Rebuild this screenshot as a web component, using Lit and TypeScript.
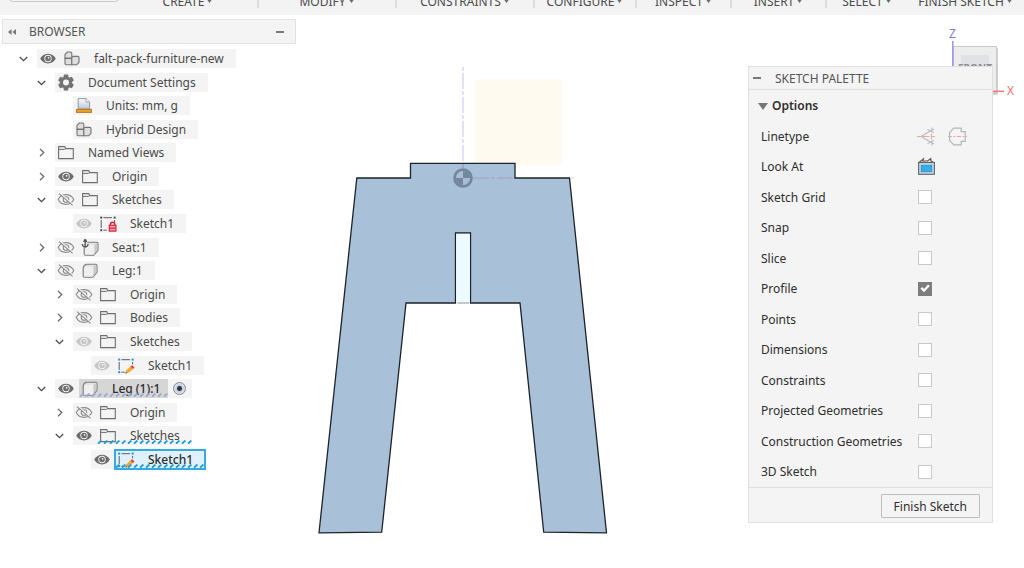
import { LitElement, html, svg, css, nothing } from "lit";
import { customElement, property } from "lit/decorators.js";
import { classMap } from "lit/directives/class-map.js";

type Eye = "on" | "off" | "dim";
interface Row {
  level: number;
  label: string;
  icon: string;
  open?: boolean;
  eye?: Eye;
  state?: "active" | "parent" | "selected";
}

const ROWS: Row[] = [
  { level: 0, label: "falt-pack-furniture-new", icon: "component", open: true, eye: "on" },
  { level: 1, label: "Document Settings", icon: "gear", open: true },
  { level: 2, label: "Units: mm, g", icon: "units" },
  { level: 2, label: "Hybrid Design", icon: "component" },
  { level: 1, label: "Named Views", icon: "folder", open: false },
  { level: 1, label: "Origin", icon: "folder", open: false, eye: "on" },
  { level: 1, label: "Sketches", icon: "folder", open: true, eye: "off" },
  { level: 2, label: "Sketch1", icon: "locked", eye: "dim" },
  { level: 1, label: "Seat:1", icon: "anchored", open: false, eye: "off" },
  { level: 1, label: "Leg:1", icon: "body", open: true, eye: "off" },
  { level: 2, label: "Origin", icon: "folder", open: false, eye: "off" },
  { level: 2, label: "Bodies", icon: "folder", open: false, eye: "off" },
  { level: 2, label: "Sketches", icon: "folder", open: true, eye: "dim" },
  { level: 3, label: "Sketch1", icon: "sketch", eye: "dim" },
  { level: 1, label: "Leg (1):1", icon: "body", open: true, eye: "on", state: "active" },
  { level: 2, label: "Origin", icon: "folder", open: false, eye: "off" },
  { level: 2, label: "Sketches", icon: "folder", open: true, eye: "on", state: "parent" },
  { level: 3, label: "Sketch1", icon: "sketch", eye: "on", state: "selected" },
];

const MENUS = ["CREATE", "MODIFY", "CONSTRAINTS", "CONFIGURE", "INSPECT", "INSERT", "SELECT", "FINISH SKETCH"];

const OPTIONS: [string, boolean][] = [
  ["Sketch Grid", false],
  ["Snap", false],
  ["Slice", false],
  ["Profile", true],
  ["Points", false],
  ["Dimensions", false],
  ["Constraints", false],
  ["Projected Geometries", false],
  ["Construction Geometries", false],
  ["3D Sketch", false],
];

const lens = "M3.2 9.5C6.5 3 15.5 3 18.8 9.5C15.5 16 6.5 16 3.2 9.5Z";

const eyeShape = (eye: Eye) =>
  eye === "off"
    ? svg`<g fill="none" stroke="#8a8a8a" stroke-width="1.1">
        <path d=${lens}/><circle cx="11" cy="9.5" r="2.8"/>
        <path d="M4.9 3.2L18.2 14.8" stroke="#f4f4f4" stroke-width="1.4"/>
        <path d="M4 3.6L17.6 15.4"/></g>`
    : svg`<g fill=${eye === "on" ? "#6c6c6c" : "#c6c6c6"}>
        <path d=${lens}/><circle cx="11" cy="9.5" r="3.7" fill="#f4f4f4"/>
        <circle cx="11" cy="9.5" r="2.8"/><circle cx="11.6" cy="8.8" r=".9" fill="#f4f4f4"/></g>`;

const bodyShape = svg`
  <path d="M7.6 3.2H16.6Q18 3.2 18 4.6V11.4L13.8 16.2H5.6Q4.2 16.2 4.2 14.8V6.8Q4.4 4 7.6 3.2Z" fill="#e3e3e3" stroke="#7b7b7b" stroke-width="1.1"/>
  <path d="M5 7.2Q5.6 5.8 7 5.8H14.4V15.4H5.4Q5 15.4 5 15Z" fill="#efefef"/>
  <path d="M14.5 5.8L17.4 3.9V11.2L14.5 14.6Z" fill="#c9c9c9"/>`;

const sketchFrame = (dot: string) => svg`
  <path d="M6.5 3.7H15M4.2 6V14M6.4 16.2H9.6M17.6 6V8.4" fill="none" stroke="#5d5d5d" stroke-width="1"/>
  <g fill=${dot}><rect x="3.2" y="2.6" width="2" height="2"/><rect x="16.6" y="2.6" width="2" height="2"/><rect x="3.2" y="15.2" width="2" height="2"/></g>`;

const SHAPES: Record<string, unknown> = {
  folder: svg`<path d="M3.6 15.6V3.6H9.8L10.6 5.6H18.3V15.6Z" fill="none" stroke="#6e6e6e" stroke-width="1.1"/>
    <path d="M4 6.4H9.4L10.6 5.6" fill="none" stroke="#6e6e6e" stroke-width="1"/>`,
  component: svg`<g fill="#dedede" stroke="#747474" stroke-width="1.1" stroke-linejoin="round">
    <path d="M6.4 3H9.6Q10.8 3 10.8 4.2V9.4H4V5.4Z"/><path d="M4 9.4H10.8V15.8H5.2Q4 15.8 4 14.6Z"/>
    <path d="M10.8 8.6L12 7.4H16.8Q18 7.4 18 8.6V13.4L15.6 15.8H10.8Z"/></g>`,
  gear: svg`<g fill="#737373">${[0, 60, 120].map(
    (a) => svg`<path d="M9 1.6H13L13.8 5H8.2ZM9 17.4H13L13.8 14H8.2Z" transform="rotate(${a} 11 9.5)"/>`
  )}</g><circle cx="11" cy="9.5" r="4.4" fill="none" stroke="#737373" stroke-width="2.8"/>`,
  units: svg`<defs><linearGradient id="pg" x2="0" y2="1"><stop stop-color="#fafbfd"/><stop offset="1" stop-color="#bcc5d8"/></linearGradient></defs>
    <path d="M5.2 13V2.6H13L16.6 6V13Z" fill="url(#pg)" stroke="#9298a5" stroke-width="1"/>
    <path d="M13 2.6V6H16.6" fill="#fff" stroke="#9298a5" stroke-width=".9"/>
    <rect x="3.6" y="13.4" width="14.8" height="3" fill="#e5a62a" stroke="#b57b16" stroke-width="1"/>`,
  body: bodyShape,
  anchored: svg`<g transform="translate(1 1)">${bodyShape}</g>
    <path d="M2 1H8.4V9.4H2Z" fill="#f4f4f4" opacity=".8"/>
    <g fill="none" stroke="#555" stroke-width="1.3"><path d="M6.2 1.6V8.8M4.4 3.4H8M3.2 6Q3.6 8.8 6.2 9Q8.8 8.8 9.2 6"/></g><circle cx="6.2" cy="2.2" r="1.3" fill="#555"/>`,
  locked: svg`${sketchFrame("#4b4b4b")}
    <path d="M13.4 11.6V10.4Q13.4 8.2 15.6 8.2Q17.8 8.2 17.8 10.4V11.6" fill="none" stroke="#d5203a" stroke-width="1.4"/>
    <rect x="12.3" y="11.3" width="6.6" height="5.8" fill="#f6a4ae" stroke="#d5203a" stroke-width="1.2"/><path d="M13 14.2H18.2" stroke="#d5203a" stroke-width="1.2"/>`,
  sketch: svg`${sketchFrame("#1f8fd6")}
    <path d="M10.4 17.6L11.4 14.2L15.4 10.6L18 13L14 16.6Z" fill="#f5a92c"/>
    <path d="M15.4 10.6L17 9.2L19.6 11.6L18 13Z" fill="#e23b35"/><path d="M10.4 17.6L10.9 15.8L12.2 17.1Z" fill="#444"/>`,
};

const icon = (shape: unknown) => html`<svg class="icon" viewBox="0 0 22 19" aria-hidden="true">${shape}</svg>`;

@customElement("tree-row")
class TreeRow extends LitElement {
  @property({ attribute: false }) row!: Row;

  static styles = css`
    :host { display: block; }
    .row { display: flex; align-items: center; height: 19px; padding-left: 12px; }
    .level-1 { padding-left: 30px; }
    .level-2 { padding-left: 48px; }
    .level-3 { padding-left: 66px; }
    button { display: block; border: 0; padding: 0; background: none; }
    .twist { width: 19px; height: 19px; margin-right: 4px; flex: none; }
    .twist svg { display: block; width: 19px; height: 19px; }
    .pill { display: flex; align-items: center; height: 19px; background: #f4f4f4; }
    .icon { display: block; width: 22px; height: 19px; flex: none; }
    .eye { margin-right: 2px; }
    .entry { display: flex; align-items: center; gap: 11px; height: 19px; padding-right: 12px; position: relative; }
    .label { font-size: 12px; line-height: 19px; white-space: nowrap; color: #4a4a4a; }
    .active { background: #d6d6d6; padding-right: 8px; }
    .active .label, .selected .label { font-weight: 500; color: #2c2c2c; }
    .selected { background: #dff2fc; outline: 2px solid #35a9e0; outline-offset: -1px; }
    .hatch { position: absolute; left: 0; bottom: 1px; width: 100%; height: 4px; color: #1c9cdc; }
    .active .hatch { color: #9aa9d4; }
    .radio { appearance: none; width: 13px; height: 13px; margin: 0 6px 0 5px; border: 1px solid #85878c; border-radius: 50%;
      background: radial-gradient(circle, #2c3440 0 2px, #c5cce0 3px, #e6e9f2 6px); }
  `;

  render() {
    const r = this.row;
    const state = r.state ?? "";
    return html`<div class=${classMap({ row: true, [`level-${r.level}`]: true })}>
      ${r.open === undefined
        ? html`<span class="twist"></span>`
        : html`<button class="twist" aria-label=${r.open ? "Collapse" : "Expand"}>
            <svg viewBox="0 0 19 19"><path d=${r.open ? "M5.8 8L9.5 11.6L13.2 8" : "M8 5.9L11.7 9.6L8 13.3"} fill="none" stroke=${r.open ? "#4c4c4c" : "#666"} stroke-width="1.3"/></svg>
          </button>`}
      <div class="pill">
        ${r.eye ? html`<button class="eye" aria-label="Visibility">${icon(eyeShape(r.eye))}</button>` : nothing}
        <div class=${classMap({ entry: true, [state || "plain"]: true })}>
          ${icon(SHAPES[r.icon])}<span class="label">${r.label}</span>
          ${state
            ? html`<svg class="hatch" aria-hidden="true"><defs><pattern id="h" width="6" height="4" patternUnits="userSpaceOnUse"><path d="M1 3.6L4.4 .6" stroke="currentColor" stroke-width="1.9"/></pattern></defs><rect width="100%" height="4" fill="url(#h)"/></svg>`
            : nothing}
        </div>
        ${state === "active" ? html`<input class="radio" type="radio" checked aria-label="Activate component" />` : nothing}
      </div>
    </div>`;
  }
}

@customElement("sketch-canvas")
class SketchCanvas extends LitElement {
  static styles = css`
    :host { display: block; }
    svg { display: block; width: 100%; height: 100%; }
    .axis { font-size: 12px; }
    .face { font-size: 10px; font-weight: 700; }
  `;
  render() {
    return html`<svg viewBox="0 15 1024 553" preserveAspectRatio="xMidYMin meet">
      <rect x="475" y="79.5" width="86.5" height="86" fill="#fffaf0" />
      <path d="M463 67V163" stroke="#dcd8f6" stroke-width="1.6" stroke-dasharray="4 2 16 2" />
      <path d="M410.5 163.3H515V178H569.5L606.5 532.8L543.7 532.2L520 303H470.5V233H455.5V303H406L381.7 532.2L319 532.8L356.8 178H410.5Z"
        fill="#a8c1d9" stroke="#1c2228" stroke-width="1.3" />
      <path d="M456.2 233.8H469.8V302.5H456.2Z" fill="#edfaff" />
      <path d="M457.5 303H469" stroke="#8e9599" stroke-width="1" />
      <path d="M463 164V168" stroke="#9792c4" stroke-width="1.2" />
      <path d="M473 178H515" stroke="#aa9db8" stroke-width="1.2" stroke-dasharray="16 2 4 2" />
      <path d="M571 178H574" stroke="#f3d2d6" stroke-width="1" />
      <circle cx="463" cy="178" r="8.4" fill="#95abc4" stroke="#72869f" stroke-width="2.8" />
      <path d="M463 178V171A7 7 0 0 1 470 178ZM463 178V185A7 7 0 0 1 456 178Z" fill="#72869f" />
      <path d="M463 178V171A7 7 0 0 0 456 178ZM463 178V185A7 7 0 0 0 470 178Z" fill="#a9bdd3" />
      <rect x="954" y="48" width="44" height="47" rx="1" fill="#d2d2d2" />
      <rect x="953.5" y="46.5" width="43" height="46" fill="#ededed" stroke="#cacaca" />
      <rect x="961" y="55" width="28" height="26" fill="#e0e2e5" />
      <text class="face" x="975" y="72" text-anchor="middle" fill="#8a8d94">FRONT</text>
      <path d="M952.8 41V92" stroke="#8f88ee" stroke-width="1.3" />
      <path d="M990 91.3H1004" stroke="#f27c7c" stroke-width="1.6" />
      <text class="axis" x="952.5" y="38" text-anchor="middle" fill="#7f78ea">Z</text>
      <text class="axis" x="1010.5" y="95" text-anchor="middle" fill="#f26d6d">X</text>
    </svg>`;
  }
}

@customElement("sketch-palette")
class SketchPalette extends LitElement {
  static styles = css`
    :host { display: block; }
    .panel { background: #f4f4f4; border: 1px solid #e0e0e0; color: #2e2e2e; font-size: 12px; line-height: 19px; }
    .head { display: flex; align-items: center; gap: 14px; height: 22px; padding-left: 4px; border-bottom: 1px solid #dedede; }
    .title { margin: 0; font-size: 12px; font-weight: 400; color: #555; }
    button { font: inherit; color: inherit; border: 0; padding: 0; background: none; }
    .min { display: block; width: 8px; height: 8px; }
    .min svg { display: block; }
    .body { display: flex; flex-direction: column; justify-content: space-between; height: 385px; padding: 6px 12px; }
    .row { display: flex; align-items: center; height: 19px; }
    .group { display: flex; align-items: center; gap: 4px; margin-left: -3px; font-weight: 600; }
    .name { width: 155px; flex: none; }
    .tools { display: flex; gap: 10px; }
    .tools svg { display: block; width: 21px; height: 21px; }
    .box { appearance: none; width: 14px; height: 14px; margin: 0 0 0 2px; background: #fff; border: 1px solid #c9c9c9; display: grid; place-items: center; }
    .box:checked { background: #7d7d7d; border-color: #7d7d7d; }
    .box:checked::before { content: ""; width: 10px; height: 10px; background: #fff; clip-path: polygon(5% 52%, 22% 36%, 40% 54%, 80% 10%, 98% 26%, 40% 88%); }
    .foot { display: flex; justify-content: flex-end; padding: 6px 12px 4px; border-top: 1px solid #dedede; }
    .finish { height: 24px; padding: 0 12px; border: 1px solid #bdbdbd; border-radius: 1px; }
  `;
  render() {
    return html`<section class="panel">
      <header class="head">
        <button class="min" aria-label="Minimize"><svg width="8" height="8"><rect y="3" width="8" height="2" fill="#777" /></svg></button>
        <h2 class="title">SKETCH PALETTE</h2>
      </header>
      <div class="body">
        <div class="row"><button class="group"><svg width="10" height="8"><path d="M0 1H10L5 8Z" fill="#777" /></svg>Options</button></div>
        <div class="row">
          <span class="name">Linetype</span>
          <span class="tools">
            <button aria-label="Construction"><svg viewBox="0 0 21 21">
              <path d="M18 3L5 10.5L18 18M11.5 3.4L17.8 6.4M11.5 17.6L17.8 14.6M16 1.6V6.6M16 14.4V19.4" fill="none" stroke="#b9bcbc" stroke-width="1.1" />
              <path d="M1 10.5H20" stroke="#f3a3a3" stroke-width="1.2" stroke-dasharray="4 1.5 7 1.5" /><path d="M15.5 7.5V13.5" stroke="#f3a3a3" stroke-width="1.1" /></svg></button>
            <button aria-label="Centerline"><svg viewBox="0 0 21 21">
              <path d="M2.6 6.6L6.8 2.2H14.2V5.6H18.2V15.4H14.2V18.8H6.8L2.6 14.4Z" fill="none" stroke="#b3b7b9" stroke-width="1.2" />
              <path d="M1 10.5H20" stroke="#f3a3a3" stroke-width="1.2" stroke-dasharray="4 1.5 2 1.5" /></svg></button>
          </span>
        </div>
        <div class="row">
          <span class="name">Look At</span>
          <span class="tools"><button aria-label="Look At"><svg viewBox="0 0 21 21">
            <path d="M3 6.5L7.5 2.8L6.8 5H11.5L14.8 2.5V4.6L17.5 6.5" fill="#e6eaec" stroke="#5f5148" stroke-width="1.1" />
            <rect x="2.6" y="6.5" width="15.8" height="11.8" fill="#c2d8e4" stroke="#5c6468" stroke-width="1.1" />
            <rect x="5.2" y="9.2" width="10.6" height="6.6" fill="#36aeee" stroke="#2b86b9" stroke-width=".7" /></svg></button></span>
        </div>
        ${OPTIONS.map(
          ([name, on], i) => html`<div class="row">
            <label class="name" for="opt-${i}">${name}</label><input class="box" id="opt-${i}" type="checkbox" ?checked=${on} />
          </div>`
        )}
      </div>
      <footer class="foot"><button class="finish">Finish Sketch</button></footer>
    </section>`;
  }
}

@customElement("app-root")
class AppRoot extends LitElement {
  static styles = css`
    :host { display: flex; flex-direction: column; height: 100vh; overflow: hidden; background: #fff;
      font-family: "Noto Sans", "Open Sans", sans-serif; }
    .toolbar { display: grid; grid-template-columns: 119fr 140fr 138fr 138fr 102fr 95fr 95fr 80fr 117fr; grid-template-rows: 15px;
      flex: none; align-items: end; overflow: hidden; background: #f3f3f3; }
    .mode { height: 24px; margin: 0 0 13px 9px; border: 1px solid #c8c8c8; border-radius: 4px; background: #f7f7f7; }
    .cell { height: 16px; margin-bottom: 7px; }
    .divided { border-right: 2px solid #dcdcdc; }
    .menu { display: flex; justify-content: center; align-items: center; gap: 2px; width: 100%; height: 20px; padding: 0; border: 0;
      background: none; font: 12px/20px "Noto Sans", "Open Sans", sans-serif; color: #4a4a4a; white-space: nowrap; }
    .menu svg { flex: none; }
    .work { position: relative; flex: 1; display: flex; justify-content: space-between; align-items: flex-start; }
    .canvas { position: absolute; inset: 0; }
    .browser { position: relative; width: 294px; margin: 4px 0 0 2px; }
    .head { display: flex; align-items: center; height: 23px; padding: 0 11px 0 5px; background: #f4f4f4; border: 1px solid #e2e2e2; }
    .title { flex: 1; margin: 0 0 0 13px; font-size: 12px; font-weight: 400; color: #555; }
    .plain { border: 0; padding: 0; background: none; display: block; }
    .plain svg { display: block; }
    .tree { display: flex; flex-direction: column; justify-content: space-between; height: 420px; margin: 5px 0 0; padding: 0; list-style: none; }
    .palette { position: relative; width: 245px; margin: 51px 31px 0 0; }
  `;
  render() {
    return html`
      <nav class="toolbar">
        <button class="mode" aria-label="Workspace"></button>
        ${MENUS.map(
          (m, i) => html`<div class=${classMap({ cell: true, divided: i < 6 })}>
            <button class="menu">${m}<svg width="7" height="8"><path d="M0 0H7L3.5 5Z" fill="#6a6a6a" /></svg></button>
          </div>`
        )}
      </nav>
      <main class="work">
        <sketch-canvas class="canvas"></sketch-canvas>
        <aside class="browser">
          <header class="head">
            <button class="plain" aria-label="Collapse browser"><svg width="8" height="6"><path d="M3.6 0V6L0 3ZM8 0V6L4.4 3Z" fill="#777" /></svg></button>
            <h2 class="title">BROWSER</h2>
            <button class="plain" aria-label="Minimize"><svg width="8" height="2"><rect width="8" height="2" fill="#777" /></svg></button>
          </header>
          <ul class="tree">
            ${ROWS.map((row) => html`<li><tree-row .row=${row}></tree-row></li>`)}
          </ul>
        </aside>
        <sketch-palette class="palette"></sketch-palette>
      </main>`;
  }
}
